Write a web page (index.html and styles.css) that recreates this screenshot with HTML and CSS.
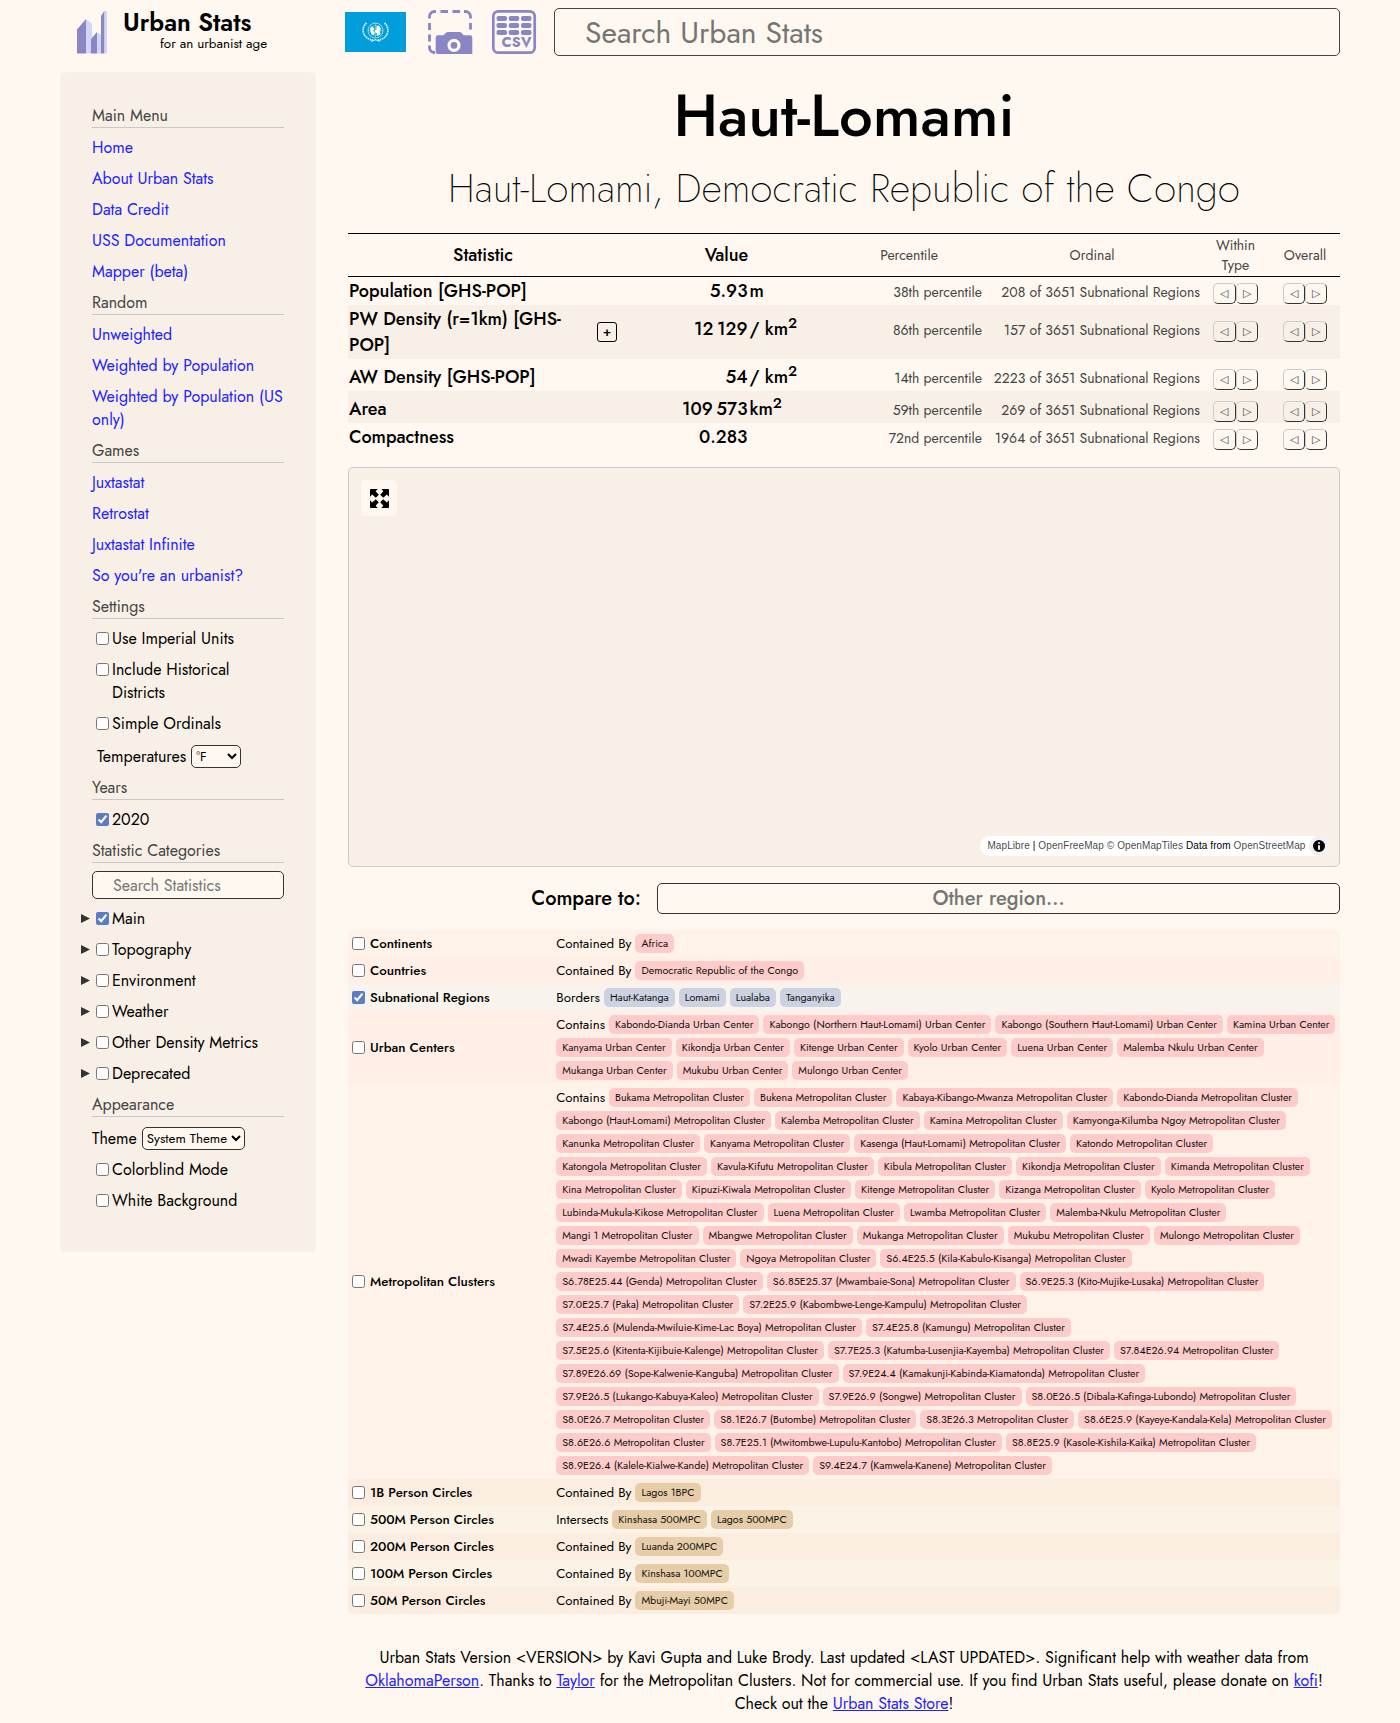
FILE: index.html
```html
<!DOCTYPE html>
<html lang="en">
<head>
<meta charset="utf-8">
<title>Haut-Lomami - Urban Stats</title>
<link rel="stylesheet" href="styles.css">
</head>
<body>
<header class="header">
  <div class="logo">
    <svg class="logo-mark" viewBox="0 0 30 44" width="30" height="44">
      <path fill="#8886c3" d="M0 19.500 9 9v34.500H0zM14 29l6-7v21.500h-6zM24 6l3.500-5.500v43H24z"/>
      <path fill="#d4d3fb" d="M9 9l6 5v14l-1 1v14.500H9zM20 22l4 3v18.500h-4zM27.500.5 30 2v41.500h-2.500z"/>
    </svg>
    <div class="logo-text"><span class="logo-name">Urban Stats</span><span class="logo-tag">for an urbanist age</span></div>
  </div>
  <svg class="flag" viewBox="0 0 61 40" width="61" height="40">
    <rect width="61" height="40" fill="#009edb"/>
    <g fill="none" stroke="#fff" stroke-width=".6">
      <circle cx="30.500" cy="18.500" r="7.500"/><circle cx="30.500" cy="18.500" r="5" opacity=".6"/><circle cx="30.500" cy="18.500" r="2.500" opacity=".6"/>
      <path opacity=".5" d="M23 18.500h15M30.500 11v15M25.200 13.200l10.600 10.600M35.800 13.200 25.200 23.800"/>
      <path stroke-width="1.700" stroke-dasharray="1.600 .6" opacity=".85" d="M21.500 11a11 10 0 0 0 7.500 17.200M39.500 11a11 10 0 0 1-7.500 17.200"/>
      <path stroke-width=".8" d="M26 29.500l5-2M35 29.500l-5-2"/>
    </g>
    <path fill="#fff" d="M25 16l2.500-1.500 1.500 2-1 2.500 2 2-2 2.500-2-2.500zM31.500 14l2-.5 2.500 3-1.500 2 1 3.500-3 2-1-3-2-1.500 2-2z"/>
  </svg>
  <svg class="shot" viewBox="0 0 44 44" width="44" height="44">
    <path fill="none" stroke="#8886c3" stroke-width="2.800" d="M1.500 8.500V6.500a5 5 0 0 1 5-5H8M12.500 1.500h7.500M24.500 1.500H32M36 1.500h1.500a5 5 0 0 1 5 5v2M42.500 13v6.500M1.500 13v7M1.500 24.500v7M1.500 35.500v2a5 5 0 0 0 5 5H7"/>
    <path fill="#8886c3" d="M10 25.300h5.500L18 22.800q.8-.8 2-.8h11.500q1.200 0 2 .8l2.200 2.500H42q2.300 0 2.300 2.200V44H9.700q-2 0-2-2V27.500q0-2.200 2.300-2.200z"/>
    <circle cx="26" cy="35.300" r="5" fill="none" stroke="#fff8f0" stroke-width="3.200"/>
  </svg>
  <svg class="csv" viewBox="0 0 44 44" width="44" height="44">
    <rect x="1.300" y="1.300" width="41.400" height="41.400" rx="5" fill="none" stroke="#8886c3" stroke-width="2.700"/>
    <g fill="#8886c3">
      <rect x="4.500" y="6" width="10.500" height="5" rx="2"/><rect x="16.700" y="6" width="10.500" height="5" rx="2"/><rect x="29" y="6" width="10.500" height="5" rx="2"/>
      <rect x="4.500" y="13" width="10.500" height="5" rx="2"/><rect x="16.700" y="13" width="10.500" height="5" rx="2"/><rect x="29" y="13" width="10.500" height="5" rx="2"/>
      <rect x="4.500" y="20" width="10.500" height="5" rx="2"/><rect x="16.700" y="20" width="10.500" height="5" rx="2"/><rect x="29" y="20" width="10.500" height="5" rx="2"/>
      <text x="9.500" y="37.300" font-size="14.300" font-weight="700" textLength="30">CSV</text>
    </g>
  </svg>
  <input class="search" type="text" placeholder="Search Urban Stats">
</header>
<div class="page">
  <nav class="sidebar">
    <h2>Main Menu</h2>
    <a href="#">Home</a><a href="#">About Urban Stats</a><a href="#">Data Credit</a><a href="#">USS Documentation</a><a href="#">Mapper (beta)</a>
    <h2>Random</h2>
    <a href="#">Unweighted</a><a href="#">Weighted by Population</a><a href="#">Weighted by Population (US only)</a>
    <h2>Games</h2>
    <a href="#">Juxtastat</a><a href="#">Retrostat</a><a href="#">Juxtastat Infinite</a><a href="#">So you're an urbanist?</a>
    <h2>Settings</h2>
    <label class="check"><input type="checkbox"><span>Use Imperial Units</span></label>
    <label class="check"><input type="checkbox"><span>Include Historical Districts</span></label>
    <label class="check"><input type="checkbox"><span>Simple Ordinals</span></label>
    <div class="pick indent"><span>Temperatures</span><select class="temp"><option>°F</option></select></div>
    <h2>Years</h2>
    <label class="check"><input type="checkbox" checked><span>2020</span></label>
    <h2>Statistic Categories</h2>
    <input class="stat-search" type="text" placeholder="Search Statistics">
    <label class="check tree"><i></i><input type="checkbox" checked><span>Main</span></label>
    <label class="check tree"><i></i><input type="checkbox"><span>Topography</span></label>
    <label class="check tree"><i></i><input type="checkbox"><span>Environment</span></label>
    <label class="check tree"><i></i><input type="checkbox"><span>Weather</span></label>
    <label class="check tree"><i></i><input type="checkbox"><span>Other Density Metrics</span></label>
    <label class="check tree"><i></i><input type="checkbox"><span>Deprecated</span></label>
    <h2>Appearance</h2>
    <div class="pick"><span>Theme</span><select class="theme"><option>System Theme</option></select></div>
    <label class="check"><input type="checkbox"><span>Colorblind Mode</span></label>
    <label class="check"><input type="checkbox"><span>White Background</span></label>
  </nav>
  <main class="main">
    <h1 class="title">Haut-Lomami</h1>
    <p class="subtitle">Haut-Lomami, Democratic Republic of the Congo</p>
    <section class="stats">
      <div class="row head"><b>Statistic</b><b>Value</b><span>Percentile</span><span>Ordinal</span><span>Within Type</span><span>Overall</span></div>
      <div class="row"><span class="name">Population [GHS-POP]</span><span class="value"><span class="num">5.93</span><span>m</span></span><span class="pct">38th percentile</span><span class="ord">208 of 3651 Subnational Regions</span><span class="nav"><button>◁</button><button>▷</button></span><span class="nav"><button>◁</button><button>▷</button></span></div>
      <div class="row alt tall"><span class="name"><span class="wrap">PW Density (r=1km) [GHS-POP]</span><button class="plus">+</button></span><span class="value"><span class="num">12&#8201;129</span><span>/ km<sup>2</sup></span></span><span class="pct">86th percentile</span><span class="ord">157 of 3651 Subnational Regions</span><span class="nav"><button>◁</button><button>▷</button></span><span class="nav"><button>◁</button><button>▷</button></span></div>
      <div class="row mid"><span class="name">AW Density [GHS-POP]</span><span class="value"><span class="num">54</span><span>/ km<sup>2</sup></span></span><span class="pct">14th percentile</span><span class="ord">2223 of 3651 Subnational Regions</span><span class="nav"><button>◁</button><button>▷</button></span><span class="nav"><button>◁</button><button>▷</button></span></div>
      <div class="row alt mid"><span class="name">Area</span><span class="value"><span class="num">109&#8201;573</span><span>km<sup>2</sup></span></span><span class="pct">59th percentile</span><span class="ord">269 of 3651 Subnational Regions</span><span class="nav"><button>◁</button><button>▷</button></span><span class="nav"><button>◁</button><button>▷</button></span></div>
      <div class="row"><span class="name">Compactness</span><span class="value"><span class="num">0.283</span></span><span class="pct">72nd percentile</span><span class="ord">1964 of 3651 Subnational Regions</span><span class="nav"><button>◁</button><button>▷</button></span><span class="nav"><button>◁</button><button>▷</button></span></div>
    </section>
    <section class="map">
      <button class="expand"><svg viewBox="0 0 19 19" width="19" height="19"><path d="M1 0h6.700L5.600 2.200l3.200 3.600-3 3-3.600-3.200L0 7.700V1q0-1 1-1zM18 0h-6.700l2.100 2.200-3.200 3.600 3 3 3.600-3.200L19 7.700V1q0-1-1-1zM1 19h6.700l-2.100-2.200 3.200-3.600-3-3-3.600 3.200L0 11.300V18q0 1 1 1zM18 19h-6.700l2.100-2.200-3.200-3.600 3-3 3.600 3.200 2.200-2.100V18q0 1-1 1z"/></svg></button>
      <div class="credit"><span><a href="#">MapLibre</a> | <a href="#">OpenFreeMap</a> <a href="#">© OpenMapTiles</a> Data from <a href="#">OpenStreetMap</a></span><i class="info"><svg viewBox="0 0 20 20" width="20" height="20"><path fill-rule="evenodd" d="M4 10a6 6 0 1 0 12 0 6 6 0 1 0-12 0m5-3a1 1 0 1 0 2 0 1 1 0 1 0-2 0m0 3a1 1 0 1 1 2 0v3a1 1 0 1 1-2 0"/></svg></i></div>
    </section>
    <section class="compare"><span>Compare to:</span><input type="text" placeholder="Other region..."></section>
    <section class="related">
      <div class="rel r1"><label><input type="checkbox">Continents</label><div class="pills"><em>Contained By</em><a>Africa</a></div></div>
      <div class="rel r2"><label><input type="checkbox">Countries</label><div class="pills"><em>Contained By</em><a>Democratic Republic of the Congo</a></div></div>
      <div class="rel blue"><label><input type="checkbox" checked>Subnational Regions</label><div class="pills"><em>Borders</em><a>Haut-Katanga</a><a>Lomami</a><a>Lualaba</a><a>Tanganyika</a></div></div>
      <div class="rel r2"><label><input type="checkbox">Urban Centers</label><div class="pills"><em>Contains</em><a>Kabondo-Dianda Urban Center</a><a>Kabongo (Northern Haut-Lomami) Urban Center</a><a>Kabongo (Southern Haut-Lomami) Urban Center</a><a>Kamina Urban Center</a><a>Kanyama Urban Center</a><a>Kikondja Urban Center</a><a>Kitenge Urban Center</a><a>Kyolo Urban Center</a><a>Luena Urban Center</a><a>Malemba Nkulu Urban Center</a><a>Mukanga Urban Center</a><a>Mukubu Urban Center</a><a>Mulongo Urban Center</a></div></div>
      <div class="rel r1"><label><input type="checkbox">Metropolitan Clusters</label><div class="pills"><em>Contains</em><a>Bukama Metropolitan Cluster</a><a>Bukena Metropolitan Cluster</a><a>Kabaya-Kibango-Mwanza Metropolitan Cluster</a><a>Kabondo-Dianda Metropolitan Cluster</a><a>Kabongo (Haut-Lomami) Metropolitan Cluster</a><a>Kalemba Metropolitan Cluster</a><a>Kamina Metropolitan Cluster</a><a>Kamyonga-Kilumba Ngoy Metropolitan Cluster</a><a>Kanunka Metropolitan Cluster</a><a>Kanyama Metropolitan Cluster</a><a>Kasenga (Haut-Lomami) Metropolitan Cluster</a><a>Katondo Metropolitan Cluster</a><a>Katongola Metropolitan Cluster</a><a>Kavula-Kifutu Metropolitan Cluster</a><a>Kibula Metropolitan Cluster</a><a>Kikondja Metropolitan Cluster</a><a>Kimanda Metropolitan Cluster</a><a>Kina Metropolitan Cluster</a><a>Kipuzi-Kiwala Metropolitan Cluster</a><a>Kitenge Metropolitan Cluster</a><a>Kizanga Metropolitan Cluster</a><a>Kyolo Metropolitan Cluster</a><a>Lubinda-Mukula-Kikose Metropolitan Cluster</a><a>Luena Metropolitan Cluster</a><a>Lwamba Metropolitan Cluster</a><a>Malemba-Nkulu Metropolitan Cluster</a><a>Mangi 1 Metropolitan Cluster</a><a>Mbangwe Metropolitan Cluster</a><a>Mukanga Metropolitan Cluster</a><a>Mukubu Metropolitan Cluster</a><a>Mulongo Metropolitan Cluster</a><a>Mwadi Kayembe Metropolitan Cluster</a><a>Ngoya Metropolitan Cluster</a><a>S6.4E25.5 (Kila-Kabulo-Kisanga) Metropolitan Cluster</a><a>S6.78E25.44 (Genda) Metropolitan Cluster</a><a>S6.85E25.37 (Mwambaie-Sona) Metropolitan Cluster</a><a>S6.9E25.3 (Kito-Mujike-Lusaka) Metropolitan Cluster</a><a>S7.0E25.7 (Paka) Metropolitan Cluster</a><a>S7.2E25.9 (Kabombwe-Lenge-Kampulu) Metropolitan Cluster</a><a>S7.4E25.6 (Mulenda-Mwiluie-Kime-Lac Boya) Metropolitan Cluster</a><a>S7.4E25.8 (Kamungu) Metropolitan Cluster</a><a>S7.5E25.6 (Kitenta-Kijibuie-Kalenge) Metropolitan Cluster</a><a>S7.7E25.3 (Katumba-Lusenjia-Kayemba) Metropolitan Cluster</a><a>S7.84E26.94 Metropolitan Cluster</a><a>S7.89E26.69 (Sope-Kalwenie-Kanguba) Metropolitan Cluster</a><a>S7.9E24.4 (Kamakunji-Kabinda-Kiamatonda) Metropolitan Cluster</a><a>S7.9E26.5 (Lukango-Kabuya-Kaleo) Metropolitan Cluster</a><a>S7.9E26.9 (Songwe) Metropolitan Cluster</a><a>S8.0E26.5 (Dibala-Kafinga-Lubondo) Metropolitan Cluster</a><a>S8.0E26.7 Metropolitan Cluster</a><a>S8.1E26.7 (Butombe) Metropolitan Cluster</a><a>S8.3E26.3 Metropolitan Cluster</a><a>S8.6E25.9 (Kayeye-Kandala-Kela) Metropolitan Cluster</a><a>S8.6E26.6 Metropolitan Cluster</a><a>S8.7E25.1 (Mwitombwe-Lupulu-Kantobo) Metropolitan Cluster</a><a>S8.8E25.9 (Kasole-Kishila-Kaika) Metropolitan Cluster</a><a>S8.9E26.4 (Kalele-Kialwe-Kande) Metropolitan Cluster</a><a>S9.4E24.7 (Kamwela-Kanene) Metropolitan Cluster</a></div></div>
      <div class="rel gold g1"><label><input type="checkbox">1B Person Circles</label><div class="pills"><em>Contained By</em><a>Lagos 1BPC</a></div></div>
      <div class="rel gold g2"><label><input type="checkbox">500M Person Circles</label><div class="pills"><em>Intersects</em><a>Kinshasa 500MPC</a><a>Lagos 500MPC</a></div></div>
      <div class="rel gold g1"><label><input type="checkbox">200M Person Circles</label><div class="pills"><em>Contained By</em><a>Luanda 200MPC</a></div></div>
      <div class="rel gold g2"><label><input type="checkbox">100M Person Circles</label><div class="pills"><em>Contained By</em><a>Kinshasa 100MPC</a></div></div>
      <div class="rel gold g1"><label><input type="checkbox">50M Person Circles</label><div class="pills"><em>Contained By</em><a>Mbuji-Mayi 50MPC</a></div></div>
    </section>
    <footer class="footer">Urban Stats Version &lt;VERSION&gt; by Kavi Gupta and Luke Brody. Last updated &lt;LAST UPDATED&gt;. Significant help with weather data from <a href="#">OklahomaPerson</a>. Thanks to <a href="#">Taylor</a> for the Metropolitan Clusters. Not for commercial use. If you find Urban Stats useful, please donate on <a href="#">kofi</a>!<br>Check out the <a href="#">Urban Stats Store</a>!</footer>
  </main>
</div>
</body>
</html>
```
FILE: styles.css
```css
* { box-sizing: border-box; }
body { margin: 0; background: #fff8f0; color: #000; font: 16px Jost, Lato, sans-serif; line-height: 23.1px; }
input, select, button { font-family: inherit; margin: 0; }
input[type="checkbox"] { width: 13px; height: 13px; margin: 0; flex: none; accent-color: #5a7dc3; }
a { color: #2222ff; }
.header { display: flex; align-items: flex-start; height: 72px; padding: 8px 60px 0; }
.logo { display: flex; width: 285px; padding: 2px 0 0 17px; }
.logo-text { display: flex; flex-direction: column; margin-left: 16px; }
.logo-name { font-size: 24.700px; font-weight: 600; line-height: 25px; }
.logo-tag { font-size: 13.400px; line-height: 17px; padding-left: 37px; }
.flag { margin-top: 4px; }
.shot { margin: 2px 0 0 22px; overflow: visible; }
.csv { margin: 2px 18px 0 20px; overflow: visible; }
.search { flex: 1; height: 48px; padding: 0 30px; border: 1px solid #444; border-radius: 5px; background: #fff8f0; font-size: 30px; }
.search::placeholder, .stat-search::placeholder, .compare input::placeholder { color: #757575; }
.page { display: flex; align-items: flex-start; gap: 32px; padding: 0 60px; }
.sidebar { display: flex; flex-direction: column; width: 256px; height: 1180px; padding: 32px; background: #f8f0e7; border-radius: 5px; line-height: 23px; }
.sidebar > * { margin: 0 0 8px; flex-shrink: 0; }
.sidebar h2 { font-size: 16px; font-weight: 400; color: #444; border-bottom: 1px solid #c8c8ca; }
.sidebar a { text-decoration: none; }
.check { display: flex; padding-left: 4px; gap: 3px; }
.check input { margin-top: 5px; }
.tree i { width: 9px; height: 9px; margin: 7px 3px 0 -15px; background: #333; clip-path: polygon(0 0, 100% 50%, 0 100%); }
.pick { display: flex; gap: 5px; height: 25px; padding-top: 2px; align-items: flex-start; }
.indent { padding-left: 5px; }
.pick select { height: 23px; border: 1px solid #333; border-radius: 5px; background: #fff8f0; font-size: 13.333px; padding: 0; color: #000; }
.temp { width: 50px; }
.theme { width: 103px; }
.stat-search { height: 28px; padding: 0 20px; border: 1px solid #333; border-radius: 5px; background: #fff8f0; font-size: 16px; }
.main { flex: 1; min-width: 0; }
.title { margin: 0; padding-top: 1px; font-size: 60px; font-weight: 500; line-height: 86px; text-align: center; }
.subtitle { margin: 0; font-size: 40px; font-weight: 200; line-height: 58px; text-align: center; padding-bottom: 16px; }
.stats { color: #444; font-size: 14px; }
.row { display: grid; grid-template-columns: 270px 217px 148px 218px 69px 70px; align-items: end; height: 28px; }
.mid { height: 32px; }
.tall { height: 54px; }
.alt { background: #f8f0e7; }
.head { height: 44px; align-items: center; text-align: center; border-top: 1px solid #000; border-bottom: 1px solid #000; line-height: 20px; }
.head b { font-size: 18px; font-weight: 500; color: #000; }
.head span:nth-child(5) { padding: 0 10px; }
.name, .value { font-size: 18px; font-weight: 500; color: #000; line-height: 26px; padding-bottom: 1px; }
.name { display: flex; justify-content: space-between; padding-left: 1px; }
.tall .name { align-items: center; }
.wrap { width: 225px; }
.tall > :not(.name) { margin-bottom: 16px; }
.value { display: flex; gap: 2px; }
.num { width: 129.500px; text-align: right; }
sup { line-height: 0; }
.pct, .ord { text-align: right; line-height: 20px; padding: 0 1px 3px 0; white-space: nowrap; }
.nav { display: flex; justify-content: center; padding-bottom: 1px; }
.nav button { width: 22.300px; height: 21px; padding: 0; border: 1px solid; border-color: #ccc #333 #333 #ccc; border-radius: 5px; background: none; font-size: 11px; line-height: 17px; color: #444; }
.plus { width: 20px; height: 20px; margin: 0 1px 0 0; padding: 0; border: 1px solid #000; border-radius: 3px; background: none; font-size: 13.333px; font-weight: 500; line-height: 16px; color: #000; }
.map { display: flex; flex-direction: column; justify-content: space-between; height: 400px; margin-top: 16px; padding: 12px 10px 10px 12px; border: 1px solid #ccc; border-radius: 5px; background: #f8f0e7; }
.expand { display: grid; place-items: center; width: 36px; height: 36px; padding: 0; border: 0; border-radius: 4px; background: #fff8f0; }
.credit { display: flex; align-self: flex-end; height: 20px; padding-left: 7px; border-radius: 12px; background: #fff; font: 10px/20px "Liberation Sans", Arial, sans-serif; letter-spacing: .1px; gap: 3.500px; }
.credit a { color: rgba(0, 0, 0, .75); text-decoration: none; }
.info { width: 20px; height: 20px; border-radius: 50%; background: #f0f0f0; }
.info svg { display: block; }
.compare { display: flex; justify-content: flex-end; align-items: center; gap: 16px; margin: 16px 0; font-size: 20px; font-weight: 500; height: 31px; }
.compare input { width: 683px; height: 31px; padding: 0; border: 1px solid #333; border-radius: 5px; background: #fff8f0; font-size: 20px; font-weight: 500; text-align: center; }
.related { border-radius: 5px; overflow: hidden; }
.rel { display: flex; align-items: center; padding: 4px; --pill: #fdccca; }
.rel label { display: flex; align-items: center; gap: 5px; width: 204.400px; font-size: 13.333px; font-weight: 500; line-height: 19px; }
.pills { display: flex; flex-wrap: wrap; gap: 4px; width: 780.500px; }
.pills em { font-style: normal; font-size: 13.333px; line-height: 19px; }
.pills a { height: 19px; padding: 0 6px; border-radius: 5px; background: var(--pill); color: #111; font-size: 10.667px; line-height: 19px; white-space: nowrap; }
.r1 { background: #fff3e9; }
.r2 { background: #ffefe6; }
.blue { background: #f8f4ed; --pill: #cdd2e3; }
.gold { --pill: #e7cca8; }
.g1 { background: #fbeee1; }
.g2 { background: #fcf3e7; }
.footer { margin-top: 32px; text-align: center; }
```
